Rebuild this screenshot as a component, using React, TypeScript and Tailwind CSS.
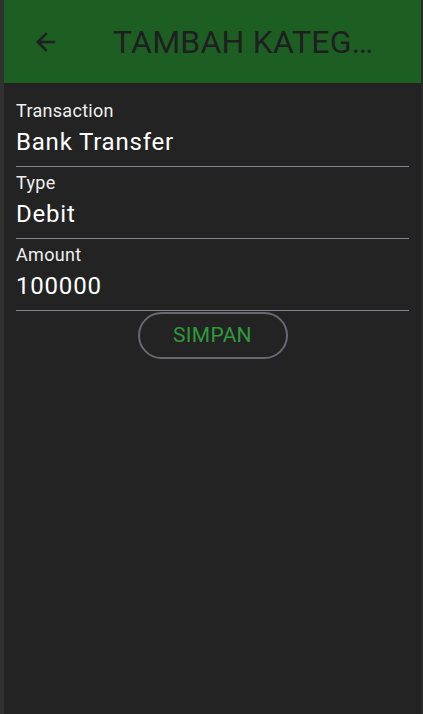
import { ArrowLeft } from "lucide-react";

interface FieldProps {
  label: string;
  value: string;
}

function Field({ label, value }: FieldProps) {
  return (
    <div className="flex h-[72px] flex-col border-b border-[#86818c]">
      <span className="mt-[5px] text-[18px] leading-[22px] tracking-[0.3px] text-[#f0f0f0]">{label}</span>
      <span className="mt-[5px] text-[24px] leading-[30px] tracking-[0.8px] text-white">{value}</span>
    </div>
  );
}

export default function App() {
  return (
    <div
      className="flex h-[714px] w-[423px] bg-[#232323]"
      style={{ fontFamily: "Roboto, 'Noto Sans', sans-serif" }}
    >
      <div className="w-[4px] bg-[#303030]" />
      <div className="flex flex-1 flex-col">
        <header className="flex h-[83px] items-center bg-[#1d5e22] pl-[28px] pr-[8px]">
          <ArrowLeft size={28} strokeWidth={2.2} color="#1f1f1f" />
          <h1 className="ml-[53px] truncate text-[32px] tracking-[0.2px] text-[#1f1f22]">TAMBAH KATEG…</h1>
        </header>
        <div className="flex flex-col pl-[12px] pr-[12px] pt-[12px]">
          <Field label="Transaction" value="Bank Transfer" />
          <Field label="Type" value="Debit" />
          <Field label="Amount" value="100000" />
          <div className="flex justify-center">
            <button className="mt-[1px] h-[47px] w-[150px] rounded-full border-2 border-[#6b6770] text-[21px] tracking-[0.3px] text-[#2f9a3b]">
              SIMPAN
            </button>
          </div>
        </div>
      </div>
      <div className="w-[2px] bg-[#2a2a2a]" />
    </div>
  );
}
